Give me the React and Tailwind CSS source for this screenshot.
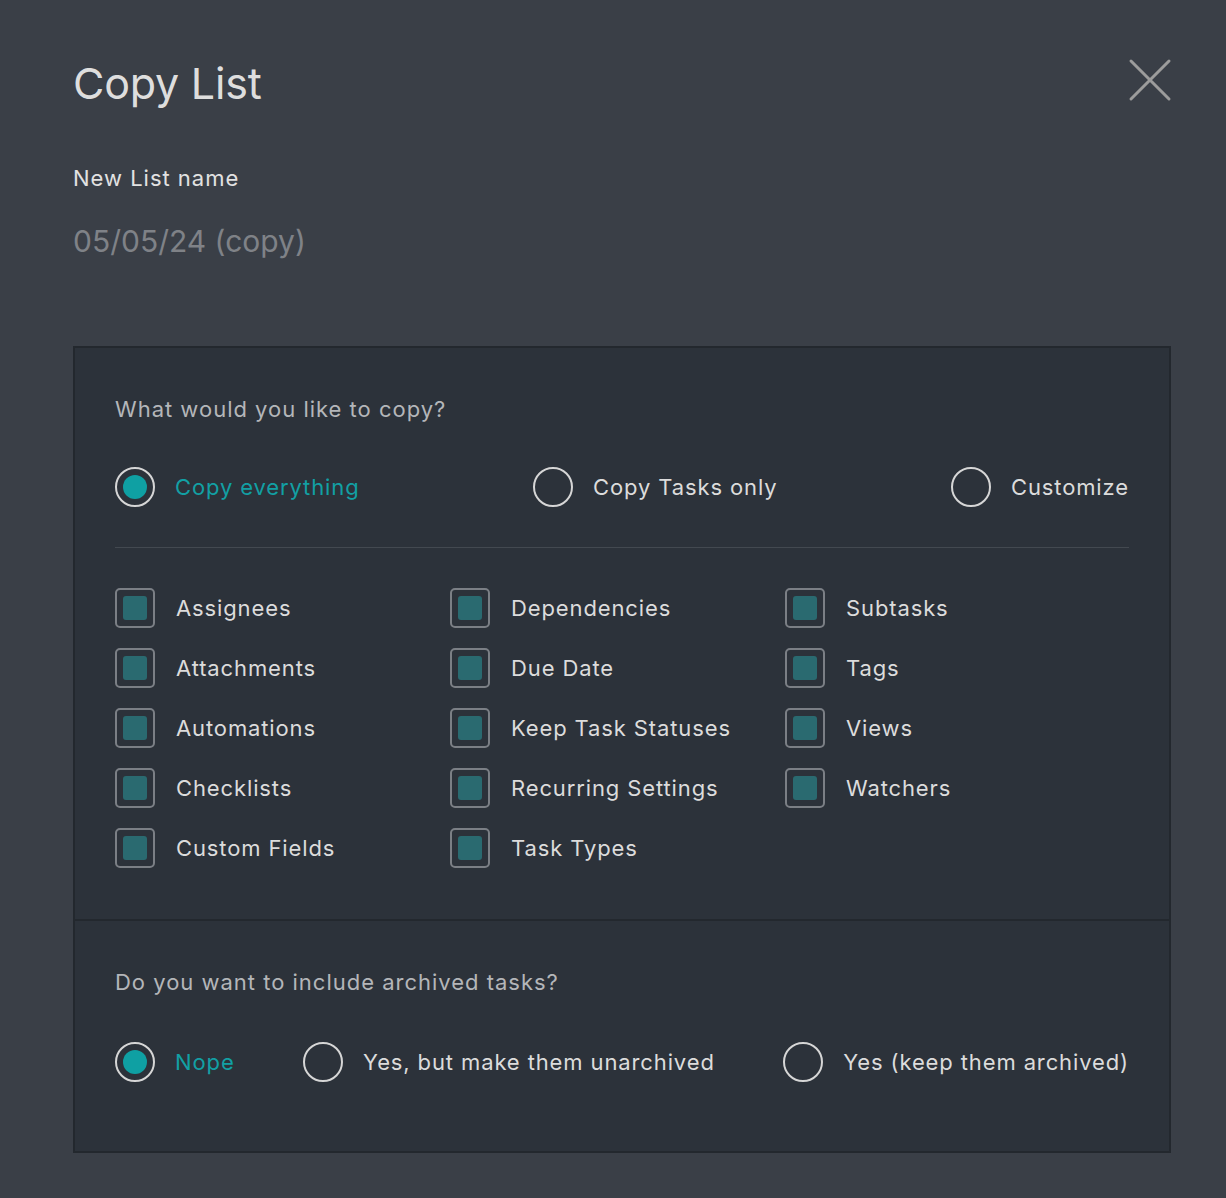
import React from 'react';

const font = { fontFamily: 'Inter, "Noto Sans", sans-serif' };

const Radio = ({ checked, label }) => (
  <div className="flex items-center gap-[20px]">
    <div className="w-[40px] h-[40px] rounded-full border-2 border-[#d6d6d6] flex items-center justify-center">
      {checked && <div className="w-[24px] h-[24px] rounded-full bg-[#0fa0a3]" />}
    </div>
    <span className={`text-[22px] tracking-[0.04em] ${checked ? 'text-[#12a0a4]' : 'text-[#dcdcdc]'}`}>{label}</span>
  </div>
);

const Check = ({ label }) => (
  <div className="flex items-center gap-[21px] h-[40px]">
    <div className="w-[40px] h-[40px] shrink-0 rounded-[5px] border-2 border-[#7b7f85] flex items-center justify-center">
      <div className="w-[24px] h-[24px] rounded-[3px] bg-[#2a6a70]" />
    </div>
    <span className="text-[22px] tracking-[0.04em] text-[#dcdcdc]">{label}</span>
  </div>
);

const cols = [
  ['Assignees', 'Attachments', 'Automations', 'Checklists', 'Custom Fields'],
  ['Dependencies', 'Due Date', 'Keep Task Statuses', 'Recurring Settings', 'Task Types'],
  ['Subtasks', 'Tags', 'Views', 'Watchers'],
];

export default function App() {
  return (
    <div className="min-h-[1198px] bg-[#3a3f47] pl-[73px] pr-[55px] pt-[52px]" style={font}>
      <div className="flex items-start justify-between">
        <h1 className="text-[43px] leading-[62px] text-[#dedede] tracking-[-0.005em]">Copy List</h1>
        <svg width="44" height="44" viewBox="0 0 44 44" className="mr-[-1px] mt-[6px]">
          <path d="M3 3 L41 41 M41 3 L3 41" stroke="#9c9c9c" strokeWidth="3" strokeLinecap="round" />
        </svg>
      </div>
      <div className="mt-[49px] text-[22px] leading-[30px] text-[#e2e2e2] tracking-[0.045em]">New List name</div>
      <div className="mt-[28px] text-[30px] leading-[40px] text-[#7f8287]">05/05/24 (copy)</div>

      <div className="mt-[85px] bg-[#2c323a] border-2 border-[#23282e]">
        <div className="px-[40px] pt-[46px] pb-[51px] border-b-2 border-[#23282e]">
          <div className="text-[22px] leading-[30px] text-[#b4b6b9] tracking-[0.045em]">What would you like to copy?</div>
          <div className="mt-[43px] flex items-center justify-between">
            <Radio checked label="Copy everything" />
            <Radio label="Copy Tasks only" />
            <Radio label="Customize" />
          </div>
          <div className="mt-[40px] h-px bg-[#434950]" />
          <div className="mt-[40px] flex">
            {cols.map((c, i) => (
              <div key={i} className="w-[335px] shrink-0 flex flex-col gap-[20px]">
                {c.map((l) => (
                  <Check key={l} label={l} />
                ))}
              </div>
            ))}
          </div>
        </div>
        <div className="px-[40px] pt-[46px] pb-[69px]">
          <div className="text-[22px] leading-[30px] text-[#b4b6b9] tracking-[0.045em]">Do you want to include archived tasks?</div>
          <div className="mt-[45px] flex items-center justify-between">
            <Radio checked label="Nope" />
            <Radio label="Yes, but make them unarchived" />
            <Radio label="Yes (keep them archived)" />
          </div>
        </div>
      </div>
    </div>
  );
}
